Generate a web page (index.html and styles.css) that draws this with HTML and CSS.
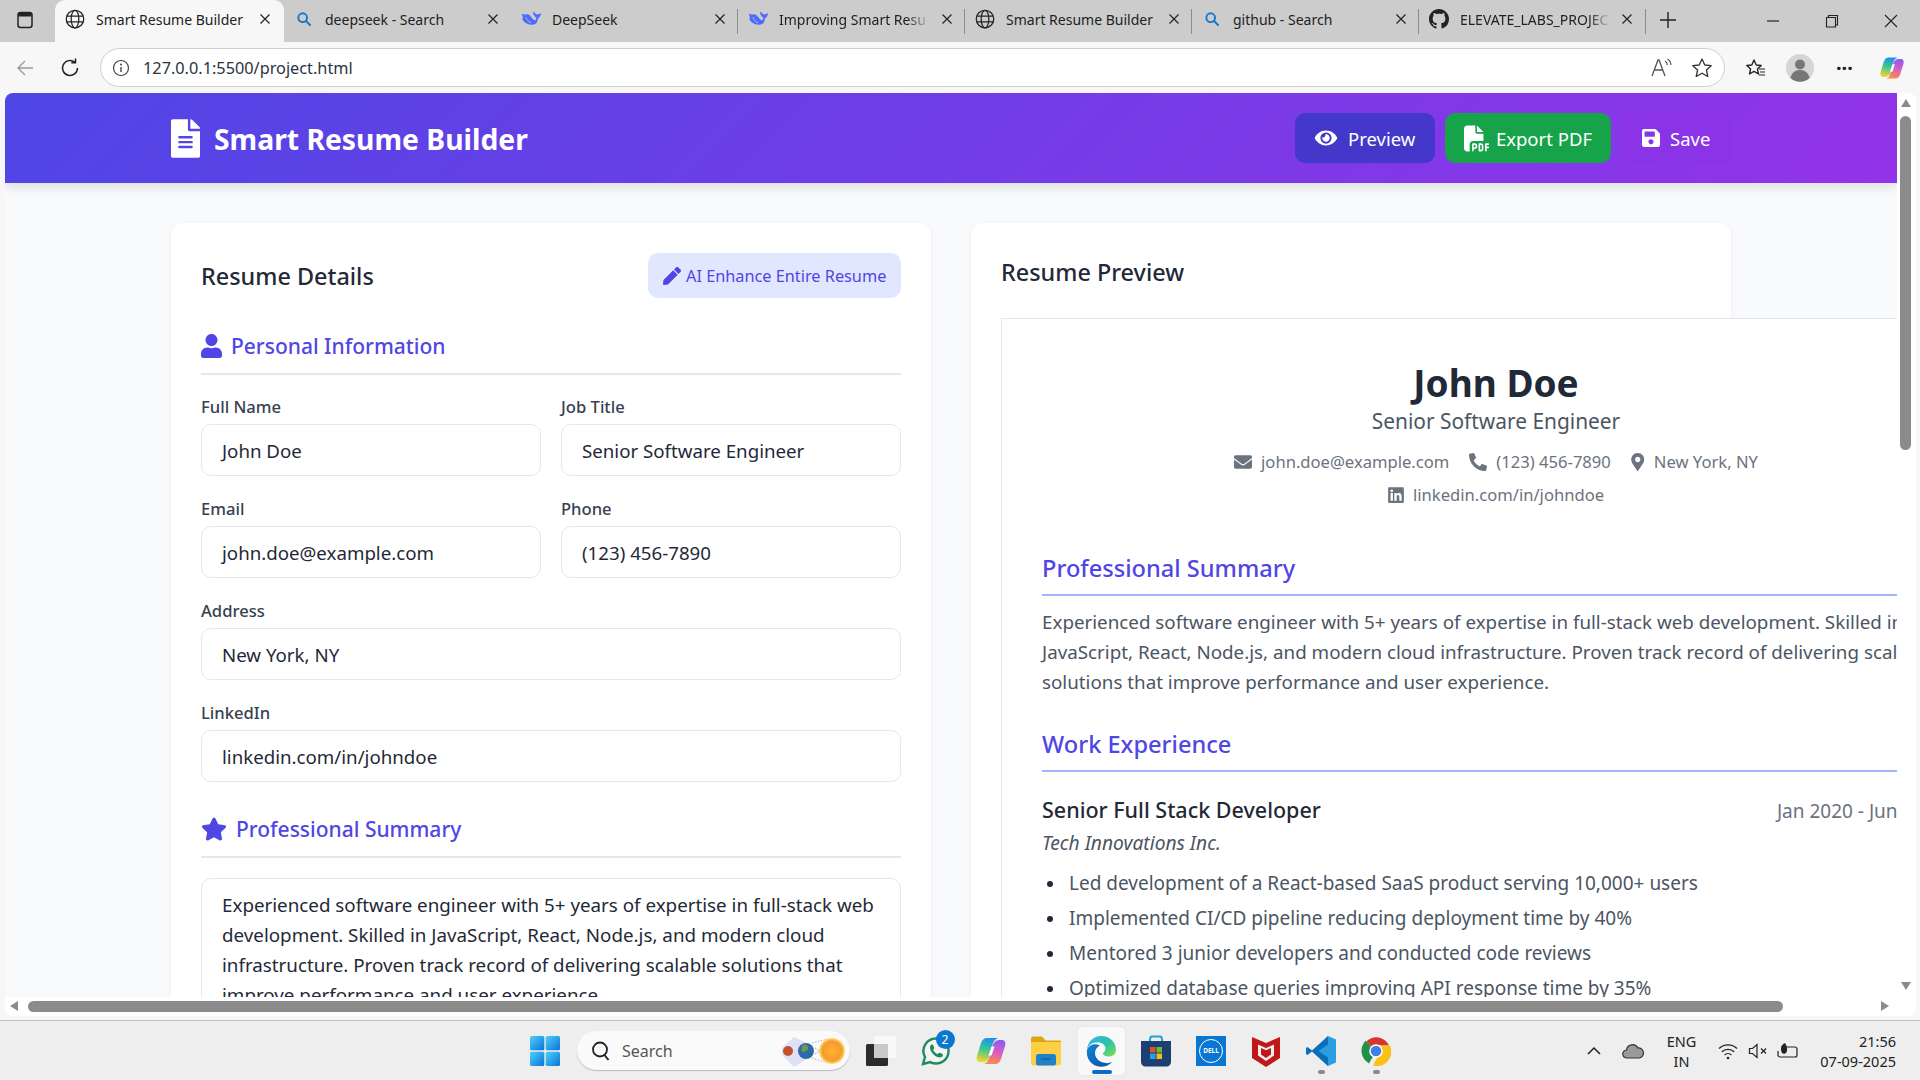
FILE: index.html
```html
<!DOCTYPE html>
<html lang="en">
<head>
  <meta charset="UTF-8" />
  <title>Smart Resume Builder</title>
  <link rel="stylesheet" href="styles.css">
</head>
<body>
  <svg class="defs" width="0" height="0">
    <defs>
      <symbol id="i-globe" viewBox="0 0 24 24"><g fill="none" stroke="#222" stroke-width="1.5"><circle cx="12" cy="12" r="10.5"/><ellipse cx="12" cy="12" rx="4.6" ry="10.5"/><path d="M2 8.5h20M2 15.5h20"/></g></symbol>
      <symbol id="i-search" viewBox="0 0 24 24"><g fill="none" stroke="#1b78c9" stroke-width="3"><circle cx="10" cy="10" r="6.5"/><path d="M15 15l6 6" stroke-linecap="round"/></g></symbol>
      <symbol id="i-whale" viewBox="0 0 24 24"><path fill="#4d6bfe" d="M1 6c2 0 3 1 5 .5 3-.8 5 1.500 7 4 1.500 1.800 3 3.500 4.500 3l1-3c-2.500-1.500-4-3.500-4-6.500.5-.5 1-.8 1.300-.3.3 1.500 2 2 3.300 3 .5-.5 1.500-1 3-.8 1.500-.3 1-1.400 2-1.400-.3 2-.5 4-2 5-1.500 1-2 3-2.500 5-.7 3-3 4.500-6 4.500-5 0-9-2-12-6.500C3 10.500 1.500 8 1 6z"/><circle cx="15" cy="8" r=".9" fill="#cccccc"/><path d="M6 10c1 3 3 5.500 6 6.500" fill="none" stroke="#cccccc" stroke-width="1"/></symbol>
      <symbol id="i-x" viewBox="0 0 12 12"><path d="M1.500 1.500l9 9M10.500 1.500l-9 9" fill="none" stroke="#222" stroke-width="1.200"/></symbol>
      <linearGradient id="g-edge" x1="0" y1="0" x2="1" y2="1"><stop offset="0" stop-color="#2fb3ee"/><stop offset=".55" stop-color="#2bc4a4"/><stop offset="1" stop-color="#84e24c"/></linearGradient>
      <linearGradient id="g-edge2" x1="0" y1="0" x2="1" y2="1"><stop offset="0" stop-color="#1383d8"/><stop offset="1" stop-color="#0b4f9e"/></linearGradient>
      <linearGradient id="g-copilot" x1="0.6" y1="0" x2="0.4" y2="1"><stop offset="0" stop-color="#1a8ff0"/><stop offset=".5" stop-color="#3cc88e"/><stop offset="1" stop-color="#f1d432"/></linearGradient>
      <linearGradient id="g-copilot2" x1="0.6" y1="0" x2="0.4" y2="1"><stop offset="0" stop-color="#8a5cf0"/><stop offset=".5" stop-color="#dd5cc4"/><stop offset="1" stop-color="#f7903e"/></linearGradient>
      <linearGradient id="g-win" x1="0" y1="0" x2="1" y2="1"><stop offset="0" stop-color="#4fd0fb"/><stop offset="1" stop-color="#0a74d6"/></linearGradient>
      <radialGradient id="g-sun"><stop offset="0" stop-color="#ffb52e"/><stop offset=".75" stop-color="#f79a2c"/><stop offset="1" stop-color="#ffe27a"/></radialGradient>
      <symbol id="i-copilot" viewBox="0 0 32 32"><path fill="url(#g-copilot)" d="M12 3h11c-3 1-4.500 3-5.500 7l-3 11c-1 4-3.500 6-6.500 6H5c-3 0-4-3-3-6L6 8c1-3 3-5 6-5z"/><path fill="url(#g-copilot2)" d="M20 29H9c3-1 4.500-4 5.500-7l3-11c1-4 3.500-6 6.500-6h3c3 0 4 3 3 6l-4 13c-1 3-3 5-6 5z"/><path fill="#fff" d="M16.500 11.500h3l-3 9h-3z"/></symbol>
    </defs>
  </svg>

  <div class="tabstrip">
    <div class="tabstrip-menu">
      <svg width="18" height="18" viewBox="0 0 18 18"><rect x="2" y="1.500" width="14" height="15" rx="2.500" fill="none" stroke="#222" stroke-width="1.500"/><path d="M2.500 2h13v3.500h-13z" fill="#222"/></svg>
    </div>
    <div class="tab tab-active"><svg class="favicon"><use href="#i-globe"/></svg><span class="tab-title">Smart Resume Builder</span><svg class="tab-close"><use href="#i-x"/></svg></div>
    <div class="tab"><svg class="favicon favicon-small"><use href="#i-search"/></svg><span class="tab-title">deepseek - Search</span><svg class="tab-close"><use href="#i-x"/></svg></div>
    <div class="tab tab-sep"><svg class="favicon"><use href="#i-whale"/></svg><span class="tab-title">DeepSeek</span><svg class="tab-close"><use href="#i-x"/></svg></div>
    <div class="tab tab-sep"><svg class="favicon"><use href="#i-whale"/></svg><span class="tab-title tab-fade">Improving Smart Resu</span><svg class="tab-close"><use href="#i-x"/></svg></div>
    <div class="tab tab-sep"><svg class="favicon"><use href="#i-globe"/></svg><span class="tab-title">Smart Resume Builder</span><svg class="tab-close"><use href="#i-x"/></svg></div>
    <div class="tab tab-sep"><svg class="favicon favicon-small"><use href="#i-search"/></svg><span class="tab-title">github - Search</span><svg class="tab-close"><use href="#i-x"/></svg></div>
    <div class="tab tab-sep tab-last">
      <svg class="favicon" viewBox="0 0 16 16"><path fill="#1f2328" d="M8 0C3.580 0 0 3.580 0 8c0 3.540 2.290 6.530 5.470 7.590.4.070.55-.170.55-.380 0-.190-.010-.820-.010-1.490-2.010.370-2.530-.490-2.690-.940-.090-.230-.480-.940-.820-1.130-.280-.150-.680-.520-.010-.530.630-.010 1.080.580 1.230.820.720 1.210 1.870.870 2.330.660.070-.520.280-.870.510-1.070-1.780-.200-3.640-.890-3.640-3.950 0-.870.310-1.590.820-2.150-.080-.200-.360-1.020.080-2.120 0 0 .670-.210 2.200.820.640-.180 1.320-.270 2-.270.680 0 1.360.090 2 .270 1.530-1.040 2.200-.820 2.200-.820.440 1.100.160 1.920.080 2.120.510.560.820 1.270.820 2.150 0 3.070-1.870 3.750-3.650 3.950.290.250.540.730.540 1.480 0 1.070-.010 1.930-.010 2.200 0 .210.150.460.550.380A8.013 8.013 0 0016 8c0-4.420-3.580-8-8-8z"/></svg>
      <span class="tab-title tab-fade">ELEVATE_LABS_PROJEC</span><svg class="tab-close"><use href="#i-x"/></svg>
    </div>
    <svg class="tab-new" width="18" height="18" viewBox="0 0 18 18"><path d="M9 1v16M1 9h16" stroke="#222" stroke-width="1.400"/></svg>
    <div class="window-controls">
      <svg width="14" height="14" viewBox="0 0 14 14"><path d="M1 7h12" stroke="#222" stroke-width="1.200"/></svg>
      <svg width="14" height="14" viewBox="0 0 14 14"><path d="M3.500 3V1.500h9V11H11M1.500 3.500h9v9.500h-9z" fill="none" stroke="#222" stroke-width="1.100"/></svg>
      <svg width="14" height="14" viewBox="0 0 14 14"><path d="M1 1l12 12M13 1L1 13" stroke="#222" stroke-width="1.100"/></svg>
    </div>
  </div>

  <div class="toolbar">
    <svg class="tool-back" width="20" height="20" viewBox="0 0 20 20"><path d="M18 10H3M10 3l-7 7 7 7" fill="none" stroke="#9a9a9a" stroke-width="1.400"/></svg>
    <svg class="tool-reload" width="22" height="22" viewBox="0 0 22 22"><path d="M18.500 11a7.500 7.500 0 1 1-2.600-5.700M16.500 1.500v4.200h-4.200" fill="none" stroke="#222" stroke-width="1.500"/></svg>
    <div class="address">
      <svg width="18" height="18" viewBox="0 0 18 18"><circle cx="9" cy="9" r="7.500" fill="none" stroke="#444" stroke-width="1.200"/><path d="M9 8v5" stroke="#444" stroke-width="1.400"/><circle cx="9" cy="5.500" r="1" fill="#444"/></svg>
      <span class="address-text">127.0.0.1:5500/project.html</span>
      <svg class="address-read" width="24" height="22" viewBox="0 0 24 22"><path d="M2 19L8 3h1l6 16M4.500 13h8" fill="none" stroke="#555" stroke-width="1.300"/><path d="M15 4c1.600 1 2.400 2.400 2.400 4M17.500 2c2.200 1.400 3.400 3.500 3.400 6" fill="none" stroke="#555" stroke-width="1.200"/></svg>
      <svg class="address-star" width="22" height="22" viewBox="0 0 22 22"><path d="M11 2l2.800 6 6.400.7-4.800 4.300 1.400 6.500L11 16.200l-5.800 3.300 1.400-6.500L1.800 8.700 8.200 8z" fill="none" stroke="#333" stroke-width="1.300" stroke-linejoin="round"/></svg>
    </div>
    <svg class="tool-fav" width="22" height="22" viewBox="0 0 22 22"><path d="M10 3l2.200 5 5 .5-3.800 3.400 1.100 5.100L10 14.400 5.500 17l1.100-5.100L2.800 8.500l5-.5z" fill="none" stroke="#222" stroke-width="1.400" stroke-linejoin="round"/><path d="M15 12h6M16 15h5M15 18h6" stroke="#222" stroke-width="1.200"/></svg>
    <svg class="tool-avatar" width="28" height="28" viewBox="0 0 28 28"><circle cx="14" cy="14" r="14" fill="#d5d5d5"/><circle cx="14" cy="10.500" r="5" fill="#777"/><path d="M4.500 24c1-5.500 5-8 9.500-8s8.500 2.500 9.500 8a14 14 0 0 1-19 0z" fill="#777"/></svg>
    <span class="tool-dots">···</span>
    <svg class="tool-copilot" width="26" height="26"><use href="#i-copilot"/></svg>
  </div>

  <div class="viewport">
    <div class="scroller">
      <div class="page">
        <header class="app-header">
          <div class="container header-inner">
            <h1 class="logo">
              <svg class="logo-icon" viewBox="0 0 384 512"><path fill="#fff" d="M224 136V0H24C10.700 0 0 10.700 0 24v464c0 13.300 10.700 24 24 24h336c13.300 0 24-10.700 24-24V160H248c-13.200 0-24-10.800-24-24zm64 236c0 6.600-5.400 12-12 12H108c-6.600 0-12-5.400-12-12v-8c0-6.600 5.400-12 12-12h168c6.600 0 12 5.400 12 12v8zm0-64c0 6.600-5.400 12-12 12H108c-6.600 0-12-5.400-12-12v-8c0-6.600 5.400-12 12-12h168c6.600 0 12 5.400 12 12v8zm0-72v8c0 6.600-5.400 12-12 12H108c-6.600 0-12-5.400-12-12v-8c0-6.600 5.400-12 12-12h168c6.600 0 12 5.400 12 12zm96-114.100v6.100H256V0h6.100c6.400 0 12.500 2.500 17 7l97.900 98c4.500 4.500 7 10.600 7 16.900z"/></svg>
              Smart Resume Builder
            </h1>
            <div class="header-actions">
              <button class="btn btn-preview"><svg class="btn-icon btn-icon-eye" viewBox="0 0 576 512"><path fill="#fff" d="M572.520 241.400C518.290 135.590 410.930 64 288 64S57.680 135.640 3.480 241.410a32.350 32.350 0 0 0 0 29.190C57.710 376.410 165.070 448 288 448s230.320-71.640 284.520-177.410a32.350 32.350 0 0 0 0-29.190zM288 400a144 144 0 1 1 144-144 143.930 143.930 0 0 1-144 144zm0-240a95.310 95.310 0 0 0-25.310 3.790 47.850 47.850 0 0 1-66.900 66.900A95.780 95.780 0 1 0 288 160z"/></svg>Preview</button>
              <button class="btn btn-export"><svg class="btn-icon btn-icon-pdf" viewBox="0 0 512 512"><path fill="#fff" d="M0 64C0 28.700 28.700 0 64 0H224V128c0 17.700 14.300 32 32 32H384V304H176c-35.300 0-64 28.700-64 64V512H64c-35.300 0-64-28.700-64-64V64zm384 64H256V0L384 128zM176 352h32c30.900 0 56 25.100 56 56s-25.100 56-56 56H192v32c0 8.800-7.200 16-16 16s-16-7.200-16-16V448 368c0-8.800 7.200-16 16-16zm32 80c13.300 0 24-10.700 24-24s-10.700-24-24-24H192v48h16zm96-80h32c26.500 0 48 21.500 48 48v64c0 26.500-21.500 48-48 48H304c-8.800 0-16-7.200-16-16V368c0-8.800 7.200-16 16-16zm32 128c8.800 0 16-7.200 16-16V400c0-8.800-7.200-16-16-16H320v96h16zm80-112c0-8.800 7.200-16 16-16h48c8.800 0 16 7.200 16 16s-7.200 16-16 16H448v32h32c8.800 0 16 7.200 16 16s-7.200 16-16 16H448v48c0 8.800-7.200 16-16 16s-16-7.200-16-16V432 368z"/></svg>Export PDF</button>
              <button class="btn btn-save"><svg class="btn-icon btn-icon-save" viewBox="0 0 448 512"><path fill="#fff" d="M433.941 129.941l-83.882-83.882A48 48 0 0 0 316.118 32H48C21.490 32 0 53.490 0 80v352c0 26.510 21.490 48 48 48h352c26.510 0 48-21.490 48-48V163.882a48 48 0 0 0-14.059-33.941zM224 416c-35.346 0-64-28.654-64-64 0-35.346 28.654-64 64-64s64 28.654 64 64c0 35.346-28.654 64-64 64zm96-304.520V212c0 6.627-5.373 12-12 12H76c-6.627 0-12-5.373-12-12V108c0-6.627 5.373-12 12-12h228.520c3.183 0 6.235 1.264 8.485 3.515l3.480 3.480A11.996 11.996 0 0 1 320 111.480z"/></svg>Save</button>
            </div>
          </div>
        </header>

        <main class="container columns">
          <section class="card card-form">
            <div class="card-top">
              <h2 class="card-title">Resume Details</h2>
              <button class="btn-ai"><svg class="ai-icon" viewBox="0 0 512 512"><path fill="#4f46e5" d="M290.740 93.240l128.020 128.020-277.990 277.990-114.140 12.600C11.350 513.540-1.560 500.620.14 485.340l12.700-114.220 277.900-277.880zm207.200-19.060l-60.110-60.110c-18.750-18.750-49.160-18.750-67.910 0l-56.550 56.550 128.020 128.020 56.550-56.550c18.750-18.760 18.750-49.160 0-67.910z"/></svg>AI Enhance Entire Resume</button>
            </div>

            <h3 class="form-section"><svg class="section-icon-user" viewBox="0 0 448 512"><path fill="#4f46e5" d="M224 256c70.700 0 128-57.300 128-128S294.700 0 224 0 96 57.300 96 128s57.300 128 128 128zm89.600 32h-16.700c-22.200 10.200-46.900 16-72.900 16s-50.600-5.800-72.900-16h-16.700C60.200 288 0 348.200 0 422.400V464c0 26.500 21.500 48 48 48h352c26.500 0 48-21.500 48-48v-41.600c0-74.200-60.200-134.400-134.400-134.400z"/></svg>Personal Information</h3>

            <div class="form-row">
              <div class="form-group"><label>Full Name</label><div class="input">John Doe</div></div>
              <div class="form-group"><label>Job Title</label><div class="input">Senior Software Engineer</div></div>
            </div>
            <div class="form-row">
              <div class="form-group"><label>Email</label><div class="input">john.doe@example.com</div></div>
              <div class="form-group"><label>Phone</label><div class="input">(123) 456-7890</div></div>
            </div>
            <div class="form-group"><label>Address</label><div class="input">New York, NY</div></div>
            <div class="form-group"><label>LinkedIn</label><div class="input">linkedin.com/in/johndoe</div></div>

            <h3 class="form-section form-section-next"><svg class="section-icon-star" viewBox="0 0 576 512"><path fill="#4f46e5" d="M259.300 17.800L194 150.200 47.900 171.500c-26.200 3.800-36.700 36.100-17.700 54.600l105.700 103-25 145.500c-4.500 26.300 23.200 46 46.400 33.700L288 439.600l130.700 68.700c23.200 12.200 50.900-7.400 46.400-33.700l-25-145.500 105.700-103c19-18.500 8.500-50.800-17.700-54.600L382 150.200 316.700 17.800c-11.700-23.600-45.600-23.900-57.400 0z"/></svg>Professional Summary</h3>
            <div class="textarea">Experienced software engineer with 5+ years of expertise in full-stack web development. Skilled in JavaScript, React, Node.js, and modern cloud infrastructure. Proven track record of delivering scalable solutions that improve performance and user experience.</div>
          </section>

          <section class="card card-preview">
            <h2 class="card-title card-title-preview">Resume Preview</h2>
            <article class="resume">
              <div class="resume-head">
                <h1 class="resume-name">John Doe</h1>
                <div class="resume-job">Senior Software Engineer</div>
                <div class="resume-contact">
                  <span><svg class="c-icon" viewBox="0 0 512 512"><path d="M502.300 190.800c3.900-3.100 9.700-.2 9.700 4.700V400c0 26.500-21.500 48-48 48H48c-26.500 0-48-21.500-48-48V195.600c0-5 5.700-7.800 9.700-4.700 22.400 17.400 52.100 39.500 154.100 113.600 21.100 15.400 56.700 47.800 92.200 47.600 35.700.3 72-32.800 92.300-47.600 102-74.100 131.600-96.300 154-113.700zM256 320c23.200.4 56.600-29.200 73.400-41.400 132.700-96.300 142.800-104.700 173.400-128.700 5.800-4.500 9.200-11.500 9.200-18.900v-19c0-26.500-21.500-48-48-48H48C21.500 64 0 85.500 0 112v19c0 7.400 3.400 14.300 9.200 18.900 30.600 23.900 40.700 32.400 173.400 128.700 16.800 12.200 50.200 41.800 73.400 41.400z"/></svg>john.doe@example.com</span>
                  <span><svg class="c-icon c-flip" viewBox="0 0 512 512"><path d="M493.400 24.600l-104-24c-11.300-2.600-22.900 3.300-27.500 13.900l-48 112c-4.200 9.800-1.400 21.300 6.900 28l60.600 49.600c-36 76.700-98.900 140.500-177.200 177.200l-49.600-60.600c-6.800-8.300-18.200-11.100-28-6.900l-112 48C3.900 366.500-2 378.100.6 389.400l24 104C27.100 504.200 36.700 512 48 512c256.100 0 464-207.500 464-464 0-11.200-7.700-20.900-18.600-23.400z"/></svg>(123) 456-7890</span>
                  <span><svg class="c-icon c-pin" viewBox="0 0 384 512"><path d="M172.268 501.670C26.970 291.031 0 262.413 0 184 0 82.381 82.381 0 184 0s184 82.381 184 184c0 78.413-26.970 107.031-172.268 317.670-9.535 13.774-29.930 13.773-39.464 0zM184 260c41.974 0 76-34.026 76-76s-34.026-76-76-76-76 34.026-76 76 34.026 76 76 76z"/></svg>New York, NY</span>
                </div>
                <div class="resume-contact resume-contact-2">
                  <span><svg class="c-icon c-in" viewBox="0 0 448 512"><path d="M416 32H31.900C14.300 32 0 46.500 0 64.300v383.400C0 465.500 14.300 480 31.900 480H416c17.600 0 32-14.500 32-32.300V64.300c0-17.800-14.400-32.300-32-32.300zM135.400 416H69V202.200h66.500V416zm-33.200-243c-21.300 0-38.500-17.300-38.500-38.500S80.900 96 102.200 96c21.200 0 38.500 17.300 38.500 38.500 0 21.300-17.200 38.500-38.500 38.500zm282.100 243h-66.400V312c0-24.800-.5-56.700-34.500-56.700-34.600 0-39.900 27-39.900 54.900V416h-66.400V202.200h63.700v29.200h.9c8.900-16.800 30.600-34.500 62.900-34.500 67.200 0 79.700 44.300 79.700 101.900V416z"/></svg>linkedin.com/in/johndoe</span>
                </div>
              </div>

              <h2 class="resume-section resume-section-first">Professional Summary</h2>
              <p class="resume-text">Experienced software engineer with 5+ years of expertise in full-stack web development. Skilled in JavaScript, React, Node.js, and modern cloud infrastructure. Proven track record of delivering scalable solutions that improve performance and user experience.</p>

              <h2 class="resume-section">Work Experience</h2>
              <div class="job-head">
                <h3 class="job-title">Senior Full Stack Developer</h3>
                <span class="job-dates">Jan 2020 - Jun 2023</span>
              </div>
              <div class="job-company">Tech Innovations Inc.</div>
              <ul class="job-list">
                <li>Led development of a React-based SaaS product serving 10,000+ users</li>
                <li>Implemented CI/CD pipeline reducing deployment time by 40%</li>
                <li>Mentored 3 junior developers and conducted code reviews</li>
                <li>Optimized database queries improving API response time by 35%</li>
              </ul>
            </article>
          </section>
        </main>
      </div>
    </div>

    <div class="vscroll">
      <span class="arrow arrow-up"></span>
      <span class="vthumb"></span>
      <span class="arrow arrow-down"></span>
    </div>
    <div class="hscroll">
      <span class="arrow arrow-left"></span>
      <span class="hthumb"></span>
      <span class="arrow arrow-right"></span>
    </div>
  </div>

  <footer class="taskbar">
    <div class="task-start">
      <svg width="30" height="30" viewBox="0 0 30 30"><rect x="0" y="0" width="14.300" height="14.300" rx="1.500" fill="url(#g-win)"/><rect x="15.700" y="0" width="14.300" height="14.300" rx="1.500" fill="url(#g-win)"/><rect x="0" y="15.700" width="14.300" height="14.300" rx="1.500" fill="url(#g-win)"/><rect x="15.700" y="15.700" width="14.300" height="14.300" rx="1.500" fill="url(#g-win)"/></svg>
    </div>
    <div class="task-search">
      <svg width="22" height="22" viewBox="0 0 22 22"><circle cx="10" cy="9.500" r="7" fill="none" stroke="#222" stroke-width="1.800"/><path d="M14.500 15l4 5" stroke="#222" stroke-width="2"/></svg>
      <span class="task-search-text">Search</span>
      <svg class="task-search-art" width="68" height="39" viewBox="0 0 68 39"><path d="M2 17L14 6l13 6v16l-13 8L2 24z" fill="#dfdff5"/><path d="M32 12l16-4M32 27l16 5M35 17l8 5M35 23l8-5" stroke="#8a8aa0" stroke-width=".7" stroke-dasharray="1.500 1.500" fill="none"/><circle cx="8" cy="20" r="5" fill="#c2512c"/><circle cx="26" cy="20" r="8" fill="#2f6aa8"/><path d="M23 14c3-1 6 1 5 4s-4 1-5 4c-2-2-2-6 0-8z" fill="#6f9a4a"/><circle cx="52" cy="20" r="13" fill="url(#g-sun)"/></svg>
    </div>
    <div class="task-apps">
      <div class="task-slot">
        <svg width="30" height="30" viewBox="0 0 30 30"><rect x="8" y="0" width="22" height="22" rx="1.500" fill="#f8f8f8"/><rect x="0" y="8" width="22" height="22" rx="1.500" fill="#2b2b2b"/><rect x="8" y="8" width="14" height="14" fill="#c9c9c9"/></svg>
      </div>
      <div class="task-slot">
        <svg width="32" height="32" viewBox="0 0 32 32"><path d="M16 3.500A12.500 12.500 0 0 0 5 22L3 29l7.300-1.900A12.500 12.500 0 1 0 16 3.500z" fill="#f4f4f4" stroke="#1f8a5b" stroke-width="2.400"/><path d="M11.500 9.500c-1.500 1-2 3-1 5.500 1.500 3.500 4 5.800 7 7 2.500.9 4.500.3 5.300-1.300.3-.7.200-1.300-.3-1.600l-2.600-1.300c-.5-.2-.9-.1-1.200.3l-.9 1.100c-1.900-.7-3.800-2.500-4.700-4.500l.9-1c.3-.4.400-.8.200-1.200l-1.200-2.700c-.3-.6-1.400-.7-1.500-.3z" fill="#1f8a5b"/></svg>
        <span class="task-badge">2</span>
      </div>
      <div class="task-slot"><svg width="32" height="32"><use href="#i-copilot"/></svg></div>
      <div class="task-slot">
        <svg width="32" height="30" viewBox="0 0 32 30"><path d="M1 3c0-1.500 1-2.500 2.500-2.500H12l3.500 4H30c.6 0 1 .5 1 1V8H1z" fill="#dba514"/><path d="M1 6h30v21c0 1.500-1 2.500-2.500 2.500h-25C2 29.500 1 28.500 1 27z" fill="#fdcf46"/><rect x="6" y="18" width="20" height="11.500" rx="2.500" fill="#1f82c9"/><path d="M11 23h10" stroke="#0d5a96" stroke-width="1.200"/></svg>
      </div>
      <div class="task-slot task-slot-active">
        <svg width="32" height="32" viewBox="0 0 32 32"><path d="M2 15C2.500 6.500 9 1 16 1c8.500 0 15 6 15 14 0 4-3 6.500-7 6.500-3 0-6-1-6-3 0-.5.500-1 1.200-1.700.8-.9 1.300-1.800 1.300-3 0-3.500-3-6.500-8-6.500C7 7.300 3.500 10 2 15z" fill="url(#g-edge)"/><path d="M2 15c-.7 5 1 10 5 13.500 4 3.300 9.500 4 14 2.500 2.500-.8 4.500-2.200 6-4-3 1.500-7 1.500-10.500 0-4-1.700-6.500-5-6.500-9 0-3.500 2-6 5-7.500C10 7.800 4 9.500 2 15z" fill="url(#g-edge2)"/></svg>
        <span class="task-active-bar"></span>
      </div>
      <div class="task-slot">
        <svg width="30" height="32" viewBox="0 0 30 32"><path d="M9 7V4.500C9 2.500 10 1.500 11 1.500h8c1 0 2 1 2 3V7" fill="none" stroke="#19a3e0" stroke-width="2"/><path d="M0 6h30v21c0 2.500-2 4.500-4.500 4.500h-21C2 31.500 0 29.500 0 27z" fill="#1d3f72"/><rect x="9" y="12" width="5.500" height="5.500" fill="#e8502a"/><rect x="15.500" y="12" width="5.500" height="5.500" fill="#6ebc2f"/><rect x="9" y="18.500" width="5.500" height="5.500" fill="#1fa3e6"/><rect x="15.500" y="18.500" width="5.500" height="5.500" fill="#fbb81c"/></svg>
      </div>
      <div class="task-slot">
        <div class="dell-tile"><span class="dell-ring">DELL</span></div>
      </div>
      <div class="task-slot">
        <svg width="28" height="32" viewBox="0 0 28 32"><path d="M0 2l14 6 14-6v21L14 32 0 23z" fill="#c01818"/><path d="M6 9.500l8 3.500 8-3.500v11L14 26l-8-5.500z" fill="#eee"/><path d="M9 13l5 2.200 5-2.200v6.500L14 23l-5-3.500z" fill="#c01818"/></svg>
      </div>
      <div class="task-slot">
        <svg width="30" height="30" viewBox="0 0 30 30"><path d="M22 0l8 3.500v23L22 30 8 17z" fill="#2c9fe3"/><path d="M22 0L6 14.500 1.500 11 0 12v6l1.500 1L6 15.500 22 30V21.500L12.500 15 22 8.500z" fill="#0a6fba"/></svg>
        <span class="task-dot"></span>
      </div>
      <div class="task-slot">
        <svg width="30" height="30" viewBox="0 0 30 30"><path d="M15 15L5.200 5.500A14 14 0 0 1 28 9.500H15z" fill="#d8352c"/><path d="M15 15l-7 12.500A14.500 14.500 0 0 1 4.500 4.800z" fill="#1f9148"/><path d="M15 9.500h14A14.500 14.500 0 0 1 12 29.500l7-13z" fill="#fbc118"/><circle cx="15" cy="15" r="6.800" fill="#fff"/><circle cx="15" cy="15" r="5.300" fill="#3f7fe6"/></svg>
        <span class="task-dot"></span>
      </div>
    </div>
    <div class="tray">
      <svg class="tray-chevron" width="14" height="10" viewBox="0 0 14 10"><path d="M1 8l6-6 6 6" fill="none" stroke="#222" stroke-width="1.500"/></svg>
      <svg class="tray-cloud" width="22" height="16" viewBox="0 0 22 16"><path d="M5 15a4 4 0 0 1-.5-8A6 6 0 0 1 15.800 5 5 5 0 0 1 17 15z" fill="#9a9a9a" stroke="#333" stroke-width="1.200"/></svg>
      <div class="tray-lang"><span>ENG</span><span>IN</span></div>
      <svg class="tray-wifi" width="20" height="18" viewBox="0 0 20 18"><path d="M1 6.500a13 13 0 0 1 18 0M3.800 9.800a9 9 0 0 1 12.400 0M6.600 13a5 5 0 0 1 6.800 0" fill="none" stroke="#222" stroke-width="1.300"/><circle cx="10" cy="16" r="1.300" fill="#222"/></svg>
      <svg class="tray-sound" width="20" height="18" viewBox="0 0 20 18"><path d="M1.500 6.500h3L9 2.500v13l-4.500-4h-3z" fill="none" stroke="#222" stroke-width="1.200"/><path d="M13 6.500l5 5M18 6.500l-5 5" stroke="#222" stroke-width="1.200"/></svg>
      <svg class="tray-battery" width="22" height="18" viewBox="0 0 22 18"><path d="M4 5h14c1 0 2 1 2 2v6c0 1-1 2-2 2H3c-1 0-2-1-2-2V9" fill="none" stroke="#222" stroke-width="1.200"/><path d="M8 1C4 3 3 7 5 11c1 1 3 1 4 0 2-3 1-7-1-10z" fill="#222"/></svg>
      <div class="tray-clock"><span>21:56</span><span>07-09-2025</span></div>
    </div>
  </footer>
</body>
</html>
```

FILE: styles.css
```css
* {
  box-sizing: border-box;
}

html, body {
  margin: 0;
  height: 1080px;
  overflow: hidden;
}

body {
  display: flex;
  flex-direction: column;
  font-family: "Noto Sans", "Open Sans", sans-serif;
  background: #f7f7f7;
  color: #1f2937;
}

.defs {
  position: absolute;
}

h1, h2, h3, p, ul {
  margin: 0;
}

/* browser tabs */
.tabstrip {
  height: 42px;
  flex: none;
  display: flex;
  background: #cccccc;
}

.tabstrip-menu {
  width: 55px;
  padding: 11px 0 0 16px;
}

.tab {
  width: 227px;
  height: 40px;
  padding: 0 0 2px 10px;
  display: flex;
  align-items: center;
  position: relative;
  font-size: 14px;
  color: #222;
}

.tab-active {
  width: 229px;
  height: 42px;
  padding-bottom: 4px;
  background: #f7f7f7;
  border-radius: 10px 10px 0 0;
}

.tab-sep::after {
  content: "";
  position: absolute;
  right: 0;
  top: 9px;
  height: 25px;
  width: 1px;
  background: #8c8c8c;
}

.favicon {
  width: 20px;
  height: 20px;
  flex: none;
}

.favicon-small {
  width: 16px;
  height: 16px;
  margin: 0 2px;
}

.tab-title {
  margin-left: 11px;
  width: 159px;
  flex: none;
  white-space: nowrap;
  overflow: hidden;
}

.tab-active .tab-title {
  width: 160px;
}

.tab-fade {
  width: 151px;
  margin-right: 8px;
  -webkit-mask-image: linear-gradient(90deg, #000 85%, transparent);
  mask-image: linear-gradient(90deg, #000 85%, transparent);
}

.tab-last .tab-fade {
  margin-right: 7px;
}

.tab-close {
  width: 12px;
  height: 12px;
  margin-left: 3px;
  flex: none;
}

.tab-new {
  margin: 11px 0 0 13px;
}

.window-controls {
  margin-left: auto;
  display: flex;
  gap: 45px;
  padding: 14px 22px 0 0;
}

/* address bar */
.toolbar {
  height: 51px;
  flex: none;
  display: flex;
  align-items: center;
  background: #f7f7f7;
}

.tool-back {
  margin-left: 15px;
}

.tool-reload {
  margin-left: 24px;
}

.address {
  width: 1625px;
  height: 39px;
  margin-left: 19px;
  padding: 0 11px 0 11px;
  display: flex;
  align-items: center;
  background: #fff;
  border: 1px solid #cfcfcf;
  border-radius: 20px;
}

.address-text {
  margin-left: 13px;
  font-size: 16.3px;
  color: #2a3440;
}

.address-read {
  margin-left: auto;
}

.address-star {
  margin-left: 17px;
}

.tool-fav {
  margin-left: 19px;
}

.tool-avatar {
  margin-left: 20px;
}

.tool-dots {
  margin-left: 22px;
  font-size: 20px;
  font-weight: 700;
  line-height: 1;
  color: #222;
}

.tool-copilot {
  margin-left: 26px;
}

/* page area */
.viewport {
  height: 923px;
  flex: none;
  margin-left: 5px;
  width: 1911px;
  display: grid;
  grid-template-columns: 1892px 19px;
  grid-template-rows: 904px 19px;
  background: #fff;
  border-radius: 8px;
  overflow: hidden;
}

.scroller {
  overflow: hidden;
  background: #f9fafb;
}

.page {
  width: 1892px;
}

.vscroll {
  grid-row: 1 / 3;
  grid-column: 2;
  position: relative;
  background: #fff;
}

.hscroll {
  grid-row: 2;
  grid-column: 1;
  position: relative;
  background: #fff;
}

.vthumb {
  position: absolute;
  left: 3px;
  top: 23px;
  width: 11px;
  height: 334px;
  background: #8b8b8b;
  border-radius: 6px;
}

.hthumb {
  position: absolute;
  left: 23px;
  top: 4px;
  width: 1755px;
  height: 11px;
  background: #8b8b8b;
  border-radius: 6px;
}

.arrow {
  position: absolute;
  width: 0;
  height: 0;
  border: 5px solid transparent;
}

.arrow-up {
  left: 4px;
  top: 6px;
  border-top: 0;
  border-bottom: 8px solid #8b8b8b;
}

.arrow-down {
  left: 4px;
  top: 889px;
  border-bottom: 0;
  border-top: 8px solid #8b8b8b;
}

.arrow-left {
  left: 5px;
  top: 4px;
  border-left: 0;
  border-right: 8px solid #8b8b8b;
}

.arrow-right {
  left: 1876px;
  top: 4px;
  border-right: 0;
  border-left: 8px solid #8b8b8b;
}

.container {
  width: 1560px;
  margin-left: 166px;
}

/* app header */
.app-header {
  height: 90px;
  background: linear-gradient(135deg, #4f46e5, #9333ea);
  box-shadow: 0 4px 12px rgba(0, 0, 0, 0.12);
  position: relative;
}

.header-inner {
  height: 90px;
  display: flex;
  align-items: center;
  justify-content: space-between;
}

.logo {
  display: flex;
  align-items: center;
  gap: 14px;
  padding-top: 1px;
  color: #fff;
  font-size: 28.3px;
  font-weight: 700;
}

.logo-icon {
  width: 29px;
  height: 39px;
}

.header-actions {
  display: flex;
  gap: 10px;
}

.btn {
  height: 50px;
  padding: 0 19px;
  display: flex;
  align-items: center;
  gap: 10px;
  border: none;
  border-radius: 10px;
  color: #fff;
  font-family: inherit;
  font-size: 18.5px;
  white-space: nowrap;
}

.btn-preview {
  width: 140px;
  background: #4338ca;
}

.btn-export {
  width: 166px;
  background: #16a34a;
}

.btn-save {
  width: 110px;
  padding-left: 21px;
  background: #8b33e6;
}

.btn-icon-eye {
  width: 24px;
  height: 20px;
}

.btn-icon-pdf {
  width: 27px;
  height: 27px;
  margin-right: -4px;
}

.btn-icon-save {
  width: 18px;
  height: 22px;
}

/* columns */
.columns {
  display: flex;
  gap: 40px;
  padding-top: 40px;
}

.card {
  width: 760px;
  height: 1400px;
  flex: none;
  background: #fff;
  border-radius: 12px;
  box-shadow: 0 1px 6px rgba(0, 0, 0, 0.05);
  padding: 30px;
}

.card-top {
  display: flex;
  align-items: center;
  justify-content: space-between;
}

.card-title {
  font-size: 23.4px;
  font-weight: 500;
  color: #1f2937;
  padding-top: 1px;
}

.card-title-preview {
  line-height: 38px;
  padding-top: 0;
}

.btn-ai {
  height: 45px;
  width: 253px;
  padding: 1px 0 0 15px;
  display: flex;
  align-items: center;
  gap: 5px;
  background: #e0e7ff;
  border: none;
  border-radius: 10px;
  color: #4f46e5;
  font-family: inherit;
  font-size: 16.3px;
  white-space: nowrap;
}

.ai-icon {
  width: 18px;
  height: 18px;
}

.form-section {
  margin-top: 32px;
  height: 45px;
  line-height: 34px;
  padding-bottom: 12px;
  display: flex;
  align-items: center;
  gap: 9px;
  border-bottom: 2px solid #e5e7eb;
  color: #4f46e5;
  font-size: 21px;
  font-weight: 500;
}

.form-section-next {
  margin-top: 31px;
}

.section-icon-user {
  width: 21px;
  height: 24px;
}

.section-icon-star {
  width: 26px;
  height: 24px;
}

.form-row {
  display: grid;
  grid-template-columns: 1fr 1fr;
  gap: 20px;
}

.form-section + .form-row {
  margin-top: 20px;
}

.form-group {
  margin-bottom: 21px;
}

.form-group label {
  display: block;
  height: 24px;
  line-height: 24px;
  margin-bottom: 5px;
  font-size: 16.6px;
  font-weight: 500;
  color: #374151;
}

.input {
  height: 52px;
  line-height: 51px;
  padding: 0 20px;
  border: 1px solid #e5e7eb;
  border-radius: 10px;
  font-size: 18.7px;
  color: #1f2937;
  background: #fff;
}

.textarea {
  margin-top: 20px;
  padding: 11px 20px;
  height: 200px;
  border: 1px solid #e5e7eb;
  border-radius: 10px;
  font-size: 18.8px;
  line-height: 30px;
  color: #1f2937;
}

/* resume preview */
.resume {
  width: 990px;
  margin-top: 27px;
  padding: 40px;
  background: #fff;
  border: 1px solid #e5e7eb;
  height: 1200px;
  position: relative;
}

.resume-head {
  text-align: center;
}

.resume-name {
  font-size: 37px;
  font-weight: 700;
  line-height: 46px;
  color: #1f2937;
  margin-top: 1px;
}

.resume-job {
  font-size: 20.9px;
  line-height: 30px;
  color: #4b5563;
}

.resume-contact {
  display: flex;
  justify-content: center;
  gap: 20px;
  margin-top: 9px;
  font-size: 16.6px;
  line-height: 33px;
  color: #6b7280;
}

.resume-contact-2 {
  margin-top: 0;
}

.resume-contact span {
  display: flex;
  align-items: center;
  gap: 9px;
}

.c-icon {
  width: 18px;
  height: 18px;
  fill: #6b7280;
}

.c-flip {
  transform: scaleX(-1);
}

.c-pin {
  width: 14px;
}

.c-in {
  width: 16px;
}

.resume-section {
  margin-top: 29px;
  height: 46px;
  line-height: 36px;
  border-bottom: 2px solid #a5b4fc;
  color: #4f46e5;
  font-size: 23.6px;
  font-weight: 500;
}

.resume-section-first {
  margin-top: 39px;
}

.resume-text {
  margin-top: 11px;
  font-size: 18.8px;
  line-height: 30px;
  color: #4b5563;
}

.job-head {
  display: flex;
  justify-content: space-between;
  align-items: baseline;
  margin-top: 22px;
}

.job-title {
  font-size: 21.5px;
  font-weight: 500;
  line-height: 32px;
  color: #1f2937;
}

.job-dates {
  font-size: 19px;
  margin-right: 4px;
  color: #6b7280;
}

.job-company {
  font-size: 19.2px;
  font-style: italic;
  line-height: 30px;
  margin-top: 2px;
  color: #4b5563;
}

.job-list {
  margin-top: 8px;
  padding-left: 27px;
  list-style: none;
  font-size: 19px;
  line-height: 35px;
  color: #4b5563;
}

.job-list li {
  position: relative;
}

.job-list li::before {
  content: "";
  position: absolute;
  left: -22px;
  top: 15px;
  width: 6px;
  height: 6px;
  background: #1f2937;
  border-radius: 50%;
}

/* windows taskbar */
.taskbar {
  height: 60px;
  margin-top: 4px;
  flex: none;
  display: flex;
  align-items: center;
  background: #eeeeee;
  border-top: 1px solid #c4c4c4;
  position: relative;
}

.task-start {
  margin-left: 530px;
  height: 30px;
}

.task-search {
  width: 273px;
  height: 39px;
  margin-left: 17px;
  padding: 0 0 0 13px;
  display: flex;
  align-items: center;
  background: #fafafa;
  border-radius: 20px;
  box-shadow: 0 1px 1px rgba(0, 0, 0, 0.22);
  overflow: hidden;
}

.task-search-text {
  margin-left: 10px;
  font-size: 16px;
  color: #555;
}

.task-search-art {
  margin-left: auto;
  margin-right: 2px;
}

.task-apps {
  display: flex;
  margin-left: 3.5px;
}

.task-slot {
  width: 55px;
  height: 48px;
  display: flex;
  align-items: center;
  justify-content: center;
  position: relative;
}

.task-slot-active {
  background: #f9f9f9;
  border-radius: 4px;
  box-shadow: 0 0 1px rgba(0, 0, 0, 0.2);
  width: 47px;
  margin: 0 4px;
}

.task-active-bar {
  position: absolute;
  left: 14px;
  bottom: 1px;
  width: 20px;
  height: 4px;
  background: #0f6cc4;
  border-radius: 2px;
}

.task-dot {
  position: absolute;
  left: 24px;
  bottom: 1px;
  width: 7px;
  height: 4px;
  background: #8a8a8a;
  border-radius: 2px;
}

.task-badge {
  position: absolute;
  left: 27px;
  top: 3px;
  width: 19px;
  height: 19px;
  background: #0b76d2;
  border-radius: 50%;
  color: #fff;
  font-size: 12px;
  line-height: 19px;
  text-align: center;
}

.dell-tile {
  width: 30px;
  height: 30px;
  background: #0a76d1;
  display: flex;
  align-items: center;
  justify-content: center;
}

.dell-ring {
  width: 24px;
  height: 24px;
  border: 1.5px solid #fff;
  border-radius: 50%;
  color: #fff;
  font-size: 6.5px;
  font-weight: 700;
  line-height: 21px;
  text-align: center;
}

.tray {
  margin-left: auto;
  display: flex;
  align-items: center;
  padding-right: 24px;
  font-size: 14.5px;
  color: #222;
}

.tray-cloud {
  margin-left: 21px;
}

.tray-lang {
  margin-left: 23px;
  display: flex;
  flex-direction: column;
  align-items: center;
  line-height: 20px;
}

.tray-wifi {
  margin-left: 22px;
}

.tray-sound {
  margin-left: 10px;
}

.tray-battery {
  margin-left: 9px;
}

.tray-clock {
  margin-left: 21px;
  display: flex;
  flex-direction: column;
  align-items: flex-end;
  line-height: 20px;
}
```
